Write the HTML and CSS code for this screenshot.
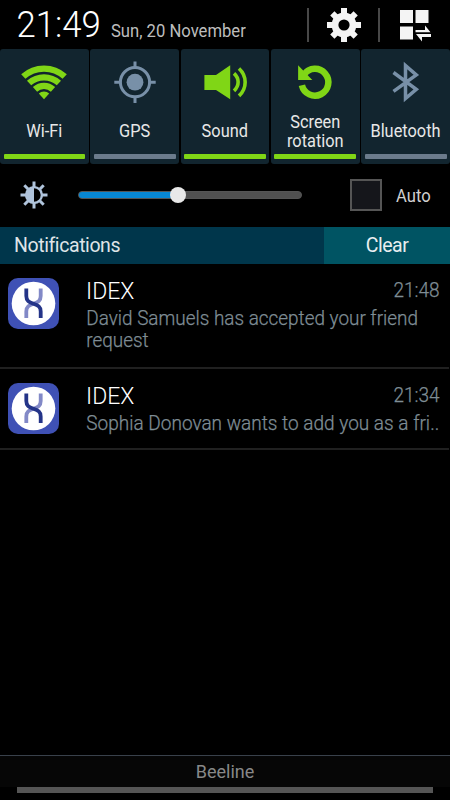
FILE: index.html
```html
<!DOCTYPE html>
<html lang="en">
<head>
<meta charset="utf-8">
<title>Notifications</title>
<link rel="stylesheet" href="styles.css">
</head>
<body>
<svg class="defs" width="0" height="0" aria-hidden="true">
  <symbol id="idex" viewBox="0 0 51 51">
    <rect width="51" height="51" rx="10" fill="#3f51b5"/>
    <circle cx="25.5" cy="25.5" r="21.8" fill="#fff"/>
    <g fill="none" stroke-width="3.8">
      <path d="M32.7 10.500v7.500c0 5-2.700 6-7.200 7.700s-7.200 2.700-7.200 7.700v6.600" stroke="#8289c7"/>
      <path d="M18.300 10.500v7.500c0 5 2.700 6 7.200 7.700s7.200 2.700 7.200 7.700v6.600" stroke="#243488"/>
    </g>
  </symbol>
</svg>
<header class="status">
  <span class="clock">21:49</span>
  <span class="date">Sun, 20 November</span>
  <div class="actions">
    <i class="divider"></i>
    <svg class="gear" width="34" height="34" viewBox="-17 -17 34 34" fill="#f4f4f4">
      <path d="M-3-17h6v34h-6zM-17-3h34v6h-34z"/>
      <g transform="rotate(45)"><path d="M-3-16.5h6v33h-6zM-16.5-3h33v6h-33z"/></g>
      <circle r="12.4"/><circle r="5.6" fill="#000"/>
    </svg>
    <i class="divider"></i>
    <svg class="panels" width="32" height="32" viewBox="0 0 32 32" fill="#f4f4f4">
      <path d="M0 0h13v13H0zM15.5 0h13v13h-13zM0 16.5h13v13H0z"/>
      <path d="M15.5 20H25v-4.500l5.500 6.800h-15zM31 24v3h-9v4.500L16 24z"/>
    </svg>
  </div>
</header>
<section class="tiles">
  <div class="tile on">
    <svg width="48" height="48" viewBox="0 0 48 48" fill="none" stroke="#80d616" stroke-width="6.3">
      <path d="M3.3 17.5a30.9 30.9 0 0 1 41.4 0"/><path d="M9.1 24a22.3 22.3 0 0 1 29.8 0"/><path d="M15 30.4a13.4 13.4 0 0 1 18 0"/><path d="M24 40.3l-5.2-5.7a7.8 7.8 0 0 1 10.4 0z" fill="#80d616" stroke="none"/>
    </svg>
    <div class="label"><span>Wi-Fi</span></div><i class="bar"></i>
  </div>
  <div class="tile">
    <svg width="48" height="48" viewBox="0 0 48 48" fill="none" stroke="#7890a8" stroke-width="3">
      <circle cx="24" cy="23.2" r="14.6"/><circle cx="24" cy="23.2" r="8.4" fill="#7890a8" stroke="none"/><path d="M24 2.5v7M24 37v7M3.3 23.2h7M37.7 23.2h7"/>
    </svg>
    <div class="label"><span>GPS</span></div><i class="bar"></i>
  </div>
  <div class="tile on">
    <svg width="48" height="48" viewBox="0 0 48 48" fill="none" stroke="#80d616" stroke-width="3.6">
      <path d="M3.4 16H15L29.2 6.3v34L15 31H3.4z" fill="#80d616" stroke="none"/><path d="M33 14.4c5.5 5 5.5 12.4 0 17.4M38 9.5c8.2 7.6 8.2 19.8 0 27.4"/>
    </svg>
    <div class="label"><span>Sound</span></div><i class="bar"></i>
  </div>
  <div class="tile on">
    <svg width="48" height="48" viewBox="0 0 48 48">
      <path d="M10.900 26.300A13.400 13.400 0 1 0 13.100 15.400" fill="none" stroke="#80d616" stroke-width="6.500"/><path d="M7.100 6.300V21H21.300z" fill="#80d616"/>
    </svg>
    <div class="label"><span>Screen</span><span>rotation</span></div><i class="bar"></i>
  </div>
  <div class="tile">
    <svg width="48" height="48" viewBox="0 0 48 48" fill="none" stroke="#7890a8" stroke-width="3.5">
      <path d="M11.5 13.5L34.3 30.3L23.5 39.5V6.5L34.3 15.8L11.5 32.3"/>
    </svg>
    <div class="label"><span>Bluetooth</span></div><i class="bar"></i>
  </div>
</section>
<section class="brightness">
  <svg width="28" height="28" viewBox="-14 -14 28 28">
    <g stroke="#b0c4dc" stroke-width="3" fill="none"><path d="M0-13.500V-8M0 8v5.500M-13.500 0H-8M8 0h5.500M-9.700-9.700L-6-6M6 6l3.700 3.700M-9.700 9.700L-6 6M6-6l3.700-3.700"/><circle r="7.900" stroke-width="2.400"/></g>
    <path d="M0-7.500A7.500 7.500 0 0 0 0 7.500z" fill="#b0c4dc"/>
  </svg>
  <div class="slider"><div class="fill"></div><div class="knob"></div></div>
  <div class="check"></div>
  <span class="auto">Auto</span>
</section>
<section class="heading"><h1>Notifications</h1><button><span>Clear</span></button></section>
<main>
  <article class="first">
    <svg width="51" height="51"><use href="#idex"/></svg>
    <div class="copy">
      <div class="top"><h2>IDEX</h2><time>21:48</time></div>
      <p><span class="line">David Samuels has accepted your friend</span><span class="line">request</span></p>
    </div>
  </article>
  <article class="second">
    <svg width="51" height="51"><use href="#idex"/></svg>
    <div class="copy">
      <div class="top"><h2>IDEX</h2><time>21:34</time></div>
      <p><span class="line">Sophia Donovan wants to add you as a fri..</span></p>
    </div>
  </article>
</main>
<footer><span class="carrier">Beeline</span><i class="handle"></i></footer>
</body>
</html>
```
FILE: styles.css
```css
* { box-sizing: border-box; }
body { margin: 0; width: 450px; height: 800px; background: #000; font-family: Roboto, sans-serif; display: flex; flex-direction: column; overflow: hidden; }
svg { display: block; flex: none; }
.defs { position: absolute; }
.status { height: 49px; display: flex; align-items: flex-start; padding-left: 16px; white-space: nowrap; }
.clock { font-size: 36px; font-weight: 300; line-height: 50px; color: #fff; width: 95px; transform: translateX(.5px) scaleX(.965); transform-origin: 0 0; }
.date { font-size: 17.5px; line-height: 20px; color: #bdbdbd; padding-top: 21px; transform: scaleX(.95); transform-origin: 0 0; }
.actions { display: flex; margin-left: auto; padding-right: 18px; height: 49px; }
.divider { width: 2px; height: 34px; background: #484848; margin-top: 8px; }
.gear { margin: 8px 17px 0 18px; }
.panels { margin: 10px 0 0 20px; }
.tiles { display: grid; grid-template-columns: repeat(5, 1fr); gap: 1.5px; height: 115px; }
.tile { background: #12252f; border-radius: 3px; display: flex; flex-direction: column; align-items: center; padding: 10px 3.5px 5px; }
.label { flex: 1; display: flex; flex-direction: column; align-items: center; justify-content: center; font-size: 17.5px; line-height: 19px; color: #e8e8e8; white-space: nowrap; transform: translateY(.6px) scaleX(.935); }
.bar { align-self: stretch; height: 5px; background: #6b7b8c; border-radius: 1px; }
.on .bar { background: #80d616; }
.brightness { height: 63px; display: flex; align-items: center; padding-left: 20px; padding-bottom: 1px; }
.slider { width: 224px; height: 8px; margin-left: 29.5px; border-radius: 4px; background: #505050; border: 1px solid #555; position: relative; }
.fill { width: 100px; height: 6px; border-radius: 3px; background: #0787d3; }
.knob { position: absolute; width: 16px; height: 16px; border-radius: 50%; background: #e8e8e8; left: 91px; top: -5px; }
.check { width: 32px; height: 32px; border: 2px solid #555; background: #15161b; margin-left: 48.5px; }
.auto { font-size: 17.5px; color: #d0d0d0; margin-left: 14px; transform: translateY(.8px) scaleX(.95); transform-origin: 0 0; }
.heading { height: 37px; display: flex; background: #00364b; }
h1 { margin: 0; width: 324px; padding-left: 14px; font-size: 19.5px; line-height: 38px; font-weight: 400; color: #dfe4e7; letter-spacing: -.42px; }
button { flex: 1; border: 0; padding: 0; background: #005463; color: #e8eef0; font: 400 19.5px/38px Roboto, sans-serif; letter-spacing: -.5px; }
article { display: flex; padding: 14px 10px 0 8px; border-bottom: 2px solid #202020; margin: 0 1px 0 0; }
.first { height: 105px; }
.second { height: 81px; }
.copy { flex: 1; min-width: 0; padding-left: 27px; font-weight: 300; white-space: nowrap; }
.top { display: flex; justify-content: space-between; height: 29px; }
h2 { margin: 0; font-size: 23px; line-height: 27px; font-weight: 300; color: #fff; }
time { font-size: 20px; line-height: 25px; color: #7f8d95; -webkit-text-stroke: .25px #7f8d95; transform: translateX(1px) scaleX(.95); transform-origin: 100% 0; }
p { margin: 0; padding-top: 1px; font-size: 19.5px; line-height: 22px; color: #7f8d95; -webkit-text-stroke: .25px #7f8d95; }
.line { display: block; transform: translateX(.3px) scaleX(.97); transform-origin: 0 0; }
.second .line { transform: translateX(.3px) scaleX(.975); }
footer { margin-top: auto; height: 45px; border-top: 1px solid #39414b; background: linear-gradient(#060606 31px, #000 31px); display: flex; flex-direction: column; align-items: center; }
.carrier { font-size: 18px; line-height: 30px; height: 31px; color: #888; padding-top: 1px; }
.handle { width: 416px; height: 6px; background: #555; margin-right: 1px; }
```
